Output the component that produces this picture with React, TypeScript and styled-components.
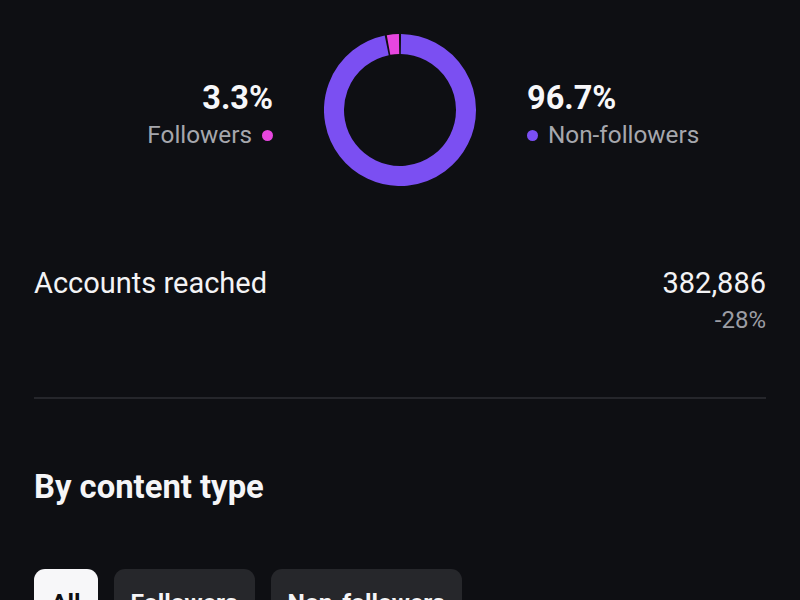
import React from 'react';
import styled, { createGlobalStyle } from 'styled-components';

const GlobalStyle = createGlobalStyle`
  html, body {
    margin: 0;
    padding: 0;
    background: #0e0f13;
  }
  body {
    font-family: Roboto, "Noto Sans", Arial, sans-serif;
    color: #f5f5f7;
    -webkit-font-smoothing: antialiased;
  }
`;

const PURPLE = '#7b4ff2';
const PINK = '#e746df';

function polar(cx: number, cy: number, r: number, deg: number) {
  const rad = ((deg - 90) * Math.PI) / 180;
  return [cx + r * Math.cos(rad), cy + r * Math.sin(rad)];
}

function arcPath(cx: number, cy: number, r: number, from: number, to: number) {
  const [x1, y1] = polar(cx, cy, r, from);
  const [x2, y2] = polar(cx, cy, r, to);
  const large = to - from > 180 ? 1 : 0;
  return `M ${x1} ${y1} A ${r} ${r} 0 ${large} 1 ${x2} ${y2}`;
}

function Donut() {
  return (
    <svg width="152" height="152" viewBox="0 0 152 152">
      <path d={arcPath(76, 76, 66, 0.8, 348.4)} fill="none" stroke={PURPLE} strokeWidth="20" />
      <path d={arcPath(76, 76, 66, 350, 359.2)} fill="none" stroke={PINK} strokeWidth="20" />
    </svg>
  );
}

const tabs = ['All', 'Followers', 'Non-followers'];

export default function App() {
  return (
    <>
      <GlobalStyle />
      <Page>
        <ChartRow>
          <Legend $align="right">
            <Percent>3.3%</Percent>
            <LegendLabel>
              Followers
              <Dot $color={PINK} />
            </LegendLabel>
          </Legend>
          <Donut />
          <Legend $align="left">
            <Percent>96.7%</Percent>
            <LegendLabel>
              <Dot $color={PURPLE} />
              Non-followers
            </LegendLabel>
          </Legend>
        </ChartRow>

        <MetricRow>
          <MetricLabel>Accounts reached</MetricLabel>
          <MetricValues>
            <MetricValue>382,886</MetricValue>
            <MetricChange>-28%</MetricChange>
          </MetricValues>
        </MetricRow>

        <Divider />

        <SectionTitle>By content type</SectionTitle>

        <Tabs>
          {tabs.map((t, i) => (
            <Tab key={t} $active={i === 0}>
              {t}
            </Tab>
          ))}
        </Tabs>
      </Page>
    </>
  );
}

const Page = styled.div`
  width: 800px;
  height: 600px;
  overflow: hidden;
  box-sizing: border-box;
  padding: 34px 34px 0;
  background: #0e0f13;
`;

const ChartRow = styled.div`
  display: flex;
  justify-content: center;
  align-items: flex-start;
  gap: 51px;
  height: 152px;
`;

const Legend = styled.div<{ $align: 'left' | 'right' }>`
  flex: 1;
  display: flex;
  flex-direction: column;
  align-items: ${({ $align }) => ($align === 'right' ? 'flex-end' : 'flex-start')};
  gap: 3px;
  padding-top: 45px;
`;

const Percent = styled.div`
  font-size: 32.5px;
  line-height: 38px;
  font-weight: 700;
  color: #f7f7f9;
`;

const LegendLabel = styled.div`
  display: flex;
  align-items: center;
  gap: 10px;
  font-size: 24.3px;
  line-height: 30px;
  color: #a6a7ad;
`;

const Dot = styled.span<{ $color: string }>`
  width: 11px;
  height: 11px;
  border-radius: 50%;
  background: ${({ $color }) => $color};
`;

const MetricRow = styled.div`
  display: flex;
  justify-content: space-between;
  align-items: flex-start;
  margin-top: 79px;
`;

const MetricLabel = styled.div`
  font-size: 29px;
  line-height: 36px;
  color: #f3f3f5;
`;

const MetricValues = styled.div`
  display: flex;
  flex-direction: column;
  align-items: flex-end;
  gap: 4px;
`;

const MetricValue = styled.div`
  font-size: 29px;
  line-height: 36px;
  color: #f3f3f5;
`;

const MetricChange = styled.div`
  font-size: 24px;
  line-height: 30px;
  color: #9c9da4;
`;

const Divider = styled.div`
  height: 2px;
  background: #25262b;
  margin-top: 62px;
`;

const SectionTitle = styled.h2`
  margin: 68px 0 0;
  font-size: 32.8px;
  line-height: 40px;
  font-weight: 700;
  color: #f5f5f7;
`;

const Tabs = styled.div`
  display: flex;
  gap: 16px;
  margin-top: 62px;
`;

const Tab = styled.div<{ $active?: boolean }>`
  padding: 19px 17px;
  border-radius: 11px;
  font-size: 24.6px;
  line-height: 30px;
  font-weight: 700;
  background: ${({ $active }) => ($active ? '#f7f7f9' : '#26272b')};
  color: ${({ $active }) => ($active ? '#0e0f13' : '#f5f5f7')};
`;
